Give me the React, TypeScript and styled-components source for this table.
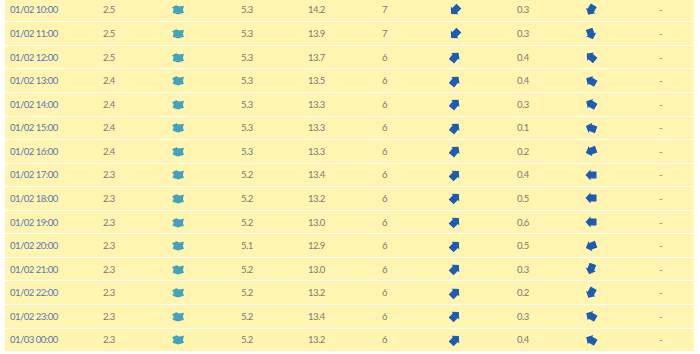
import * as React from 'react';
import styled, { createGlobalStyle } from 'styled-components';

const Colors = {
  rowYellow: '#fff4b0',
  dateBlue: '#5479b6',
  numberGray: '#7a7a7a',
  teal: '#43a2bd',
  blue: '#1c5db3',
};

type Row = {
  time: string;
  wave: string;
  period: string;
  temp: string;
  force: string;
  gust: string;
  dirA: number;
  dirB: number;
};

const rows: Row[] = [
  { time: '01/02 10:00', wave: '2.5', period: '5.3', temp: '14.2', force: '7', gust: '0.3', dirA: 225, dirB: 210 },
  { time: '01/02 11:00', wave: '2.5', period: '5.3', temp: '13.9', force: '7', gust: '0.3', dirA: 225, dirB: 160 },
  { time: '01/02 12:00', wave: '2.5', period: '5.3', temp: '13.7', force: '6', gust: '0.4', dirA: 40, dirB: 310 },
  { time: '01/02 13:00', wave: '2.4', period: '5.3', temp: '13.5', force: '6', gust: '0.4', dirA: 40, dirB: 300 },
  { time: '01/02 14:00', wave: '2.4', period: '5.3', temp: '13.3', force: '6', gust: '0.3', dirA: 40, dirB: 300 },
  { time: '01/02 15:00', wave: '2.4', period: '5.3', temp: '13.3', force: '6', gust: '0.1', dirA: 40, dirB: 290 },
  { time: '01/02 16:00', wave: '2.4', period: '5.3', temp: '13.3', force: '6', gust: '0.2', dirA: 40, dirB: 250 },
  { time: '01/02 17:00', wave: '2.3', period: '5.2', temp: '13.4', force: '6', gust: '0.4', dirA: 45, dirB: 270 },
  { time: '01/02 18:00', wave: '2.3', period: '5.2', temp: '13.2', force: '6', gust: '0.5', dirA: 45, dirB: 270 },
  { time: '01/02 19:00', wave: '2.3', period: '5.2', temp: '13.0', force: '6', gust: '0.6', dirA: 45, dirB: 270 },
  { time: '01/02 20:00', wave: '2.3', period: '5.1', temp: '12.9', force: '6', gust: '0.5', dirA: 45, dirB: 250 },
  { time: '01/02 21:00', wave: '2.3', period: '5.2', temp: '13.0', force: '6', gust: '0.3', dirA: 45, dirB: 200 },
  { time: '01/02 22:00', wave: '2.3', period: '5.2', temp: '13.2', force: '6', gust: '0.2', dirA: 45, dirB: 210 },
  { time: '01/02 23:00', wave: '2.3', period: '5.2', temp: '13.4', force: '6', gust: '0.3', dirA: 45, dirB: 300 },
  { time: '01/03 00:00', wave: '2.3', period: '5.2', temp: '13.2', force: '6', gust: '0.4', dirA: 45, dirB: 300 },
];

const Arrow = ({ color, angle }: { color: string; angle: number }) => (
  <ArrowSvg viewBox='0 0 12 12' style={{ transform: `rotate(${angle}deg)` }}>
    <path d='M6 0.5 L11.5 5.5 L9.5 5.5 L9.5 11.5 L2.5 11.5 L2.5 5.5 L0.5 5.5 Z' fill={color} />
  </ArrowSvg>
);

// the swell marker is a squat arrow, wider than it is tall
const SwellMark = () => (
  <SwellSvg viewBox='0 0 12 12'>
    <path d='M4.5 2 L7 3.2 L11.5 2.5 L10.5 6.5 L11.5 9 L6 10.5 L1 9 L2 6 L0.5 4 Z' fill={Colors.teal} />
  </SwellSvg>
);

export default function App() {
  return (
    <>
      <GlobalStyle />
      <Table>
        {rows.map((r) => (
          <TableRow key={r.time}>
            <Cell $kind='date'>{r.time}</Cell>
            <Cell>{r.wave}</Cell>
            <IconCell $pad={11}>
              <SwellMark />
            </IconCell>
            <Cell>{r.period}</Cell>
            <Cell>{r.temp}</Cell>
            <Cell>{r.force}</Cell>
            <IconCell $pad={19}>
              <Arrow color={Colors.blue} angle={r.dirA} />
            </IconCell>
            <Cell>{r.gust}</Cell>
            <IconCell $pad={6}>
              <Arrow color={Colors.blue} angle={r.dirB} />
            </IconCell>
            <Cell $pad={7}>-</Cell>
          </TableRow>
        ))}
      </Table>
    </>
  );
}

const GlobalStyle = createGlobalStyle`
  html, body {
    margin: 0;
    background: #ffffff;
    overflow: hidden;
  }
`;

const Table = styled.div`
  display: grid;
  row-gap: 1px;
  width: 689px;
  margin: -1.3px 0 0 5px;
  background: #ffffff;
  font-family: Lato, 'Liberation Sans', sans-serif;
  font-size: 9.5px;
  letter-spacing: -0.5px;
`;

const TableRow = styled.div`
  display: grid;
  grid-template-columns: 93px 62px 76px 67px 74px 53px 82px 67px 73px 42px;
  height: 22.57px;
  align-items: center;
  background: ${Colors.rowYellow};
`;

const Cell = styled.div<{ $kind?: 'date'; $pad?: number }>`
  padding-left: ${(p) => p.$pad ?? 5}px;
  color: ${(p) => (p.$kind === 'date' ? Colors.dateBlue : Colors.numberGray)};
  white-space: nowrap;
`;

const IconCell = styled.div<{ $pad: number }>`
  display: flex;
  align-items: center;
  padding-left: ${(p) => p.$pad}px;
`;

const ArrowSvg = styled.svg`
  width: 12px;
  height: 12px;
  display: block;
`;

const SwellSvg = styled.svg`
  width: 14px;
  height: 13px;
  display: block;
`;
